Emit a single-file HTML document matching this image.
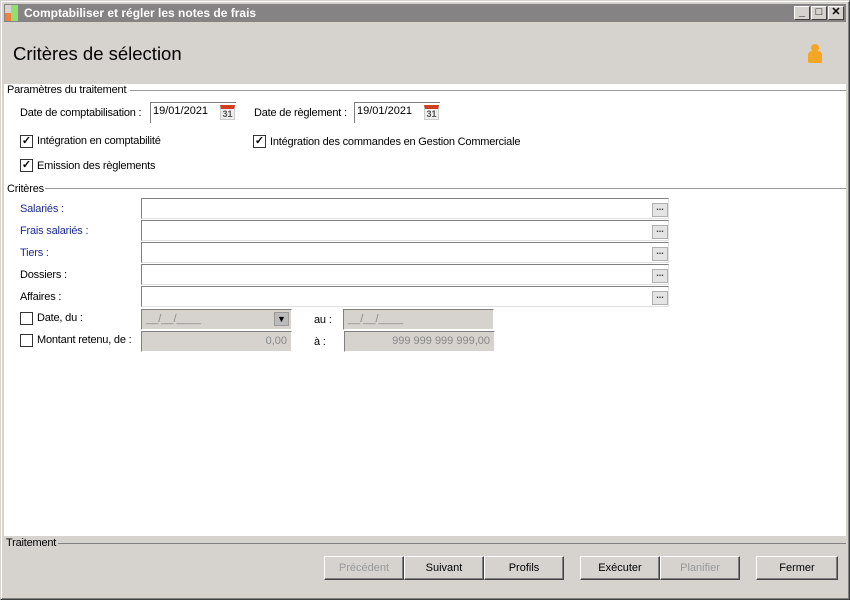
<!DOCTYPE html>
<html><head><meta charset="utf-8"><style>
*{margin:0;padding:0;box-sizing:border-box}
body{width:850px;height:600px;overflow:hidden;background:#d6d3ce;font-family:"Liberation Sans",sans-serif;font-size:11px;color:#000;position:relative}
.a{position:absolute}
.win{left:0;top:0;width:850px;height:600px;border:1px solid #d6d3ce;border-right-color:#404040;border-bottom-color:#404040;box-shadow:inset 1px 1px #fff,inset -1px -1px #808080}
.title{left:4px;top:4px;width:842px;height:18px;background:#858384;color:#fff;font-weight:bold;font-size:12px;line-height:18px;padding-left:20px}
.tb{top:6px;width:16px;height:14px;background:#d6d3ce;border:1px solid;border-color:#fff #404040 #404040 #fff;font-size:11px;line-height:11px;text-align:center;color:#000;font-weight:bold}
.white{left:4px;top:84px;width:842px;height:452px;background:#fff}
.lbl{white-space:nowrap;letter-spacing:-0.2px}
.blue{color:#1c2a8c}
.inp{background:#fff;border:1px solid;border-color:#808080 #e0e0e0 #e0e0e0 #808080;height:21px}
.dis{background:#d6d3ce;border:1px solid;border-color:#808080 #fff #fff #808080;color:#888;height:21px;line-height:19px;padding:0 4px}
.cb{width:13px;height:13px;border:1px solid #333;background:#fff;font-size:11px;line-height:10px;text-align:center;font-weight:bold}
.dots{width:16px;height:14px;background:#e4e4e4;border:1px solid #b0b0b0;font-size:9px;line-height:6px;text-align:center;font-weight:bold;color:#333}
.line{height:1px;background:#999}
.btn{top:556px;height:24px;background:#d6d3ce;border:1px solid;border-color:#fff #404040 #404040 #fff;box-shadow:inset -1px -1px #808080;text-align:center;line-height:22px;font-size:11px}
.gr{color:#999}
.cal{width:15px;height:15px;background:#eee;border:1px solid #ccc;border-top:4px solid #d04020;font-size:9px;font-weight:bold;color:#555;line-height:10px;text-align:center}
</style></head><body>
<div class="a win"></div>
<div class="a title">Comptabiliser et régler les notes de frais</div>
<div class="a" style="left:5px;top:5px;width:6px;height:8px;background:#d6d3ce"></div>
<div class="a" style="left:5px;top:13px;width:6px;height:8px;background:#f08040"></div>
<div class="a" style="left:11px;top:5px;width:7px;height:16px;background:#90e070"></div>
<div class="a tb" style="left:794px">_</div>
<div class="a tb" style="left:811px">□</div>
<div class="a tb" style="left:828px">✕</div>
<div class="a" style="left:13px;top:43px;font-size:18.5px">Critères de sélection</div>
<div class="a" style="left:811px;top:44px;width:8px;height:8px;border-radius:50%;background:#f5a623"></div>
<div class="a" style="left:808px;top:51px;width:14px;height:12px;border-radius:4px 4px 2px 2px;background:#f5a623"></div>
<div class="a white"></div>
<div class="a lbl" style="left:7px;top:84px">Paramètres du traitement</div>
<div class="a line" style="left:130px;top:90px;width:716px"></div>
<div class="a lbl" style="left:20px;top:107px">Date de comptabilisation :</div>
<div class="a inp" style="left:150px;top:102px;width:86px;border-right:none;border-bottom:none;padding:2px 2px">19/01/2021</div>
<div class="a cal" style="left:220px;top:105px">31</div>
<div class="a lbl" style="left:254px;top:107px">Date de règlement :</div>
<div class="a inp" style="left:354px;top:102px;width:86px;border-right:none;border-bottom:none;padding:2px 2px">19/01/2021</div>
<div class="a cal" style="left:424px;top:105px">31</div>
<div class="a cb" style="left:20px;top:135px">✓</div>
<div class="a lbl" style="left:37px;top:135px">Intégration en comptabilité</div>
<div class="a cb" style="left:253px;top:135px">✓</div>
<div class="a lbl" style="left:270px;top:136px">Intégration des commandes en Gestion Commerciale</div>
<div class="a cb" style="left:20px;top:159px">✓</div>
<div class="a lbl" style="left:37px;top:160px">Emission des règlements</div>
<div class="a lbl" style="left:7px;top:183px">Critères</div>
<div class="a line" style="left:45px;top:188px;width:801px"></div>
<div class="a lbl blue" style="left:20px;top:203px">Salariés :</div>
<div class="a lbl blue" style="left:20px;top:225px">Frais salariés :</div>
<div class="a lbl blue" style="left:20px;top:247px">Tiers :</div>
<div class="a lbl" style="left:20px;top:269px">Dossiers :</div>
<div class="a lbl" style="left:20px;top:291px">Affaires :</div>
<div class="a inp" style="left:141px;top:198px;width:528px"></div>
<div class="a inp" style="left:141px;top:220px;width:528px"></div>
<div class="a inp" style="left:141px;top:242px;width:528px"></div>
<div class="a inp" style="left:141px;top:264px;width:528px"></div>
<div class="a inp" style="left:141px;top:286px;width:528px"></div>
<div class="a dots" style="left:652px;top:203px">...</div>
<div class="a dots" style="left:652px;top:225px">...</div>
<div class="a dots" style="left:652px;top:247px">...</div>
<div class="a dots" style="left:652px;top:269px">...</div>
<div class="a dots" style="left:652px;top:291px">...</div>
<div class="a cb" style="left:20px;top:312px"></div>
<div class="a lbl" style="left:37px;top:312px">Date, du :</div>
<div class="a dis" style="left:141px;top:309px;width:151px">__/__/____</div>
<div class="a" style="left:274px;top:312px;width:15px;height:14px;background:#bbb;border:1px solid #999;font-size:9px;text-align:center;line-height:12px">▼</div>
<div class="a lbl" style="left:314px;top:314px">au :</div>
<div class="a dis" style="left:343px;top:309px;width:151px">__/__/____</div>
<div class="a cb" style="left:20px;top:334px"></div>
<div class="a lbl" style="left:37px;top:334px">Montant retenu, de :</div>
<div class="a dis" style="left:141px;top:331px;width:151px;text-align:right">0,00</div>
<div class="a lbl" style="left:314px;top:336px">à :</div>
<div class="a dis" style="left:344px;top:331px;width:151px;text-align:right">999 999 999 999,00</div>
<div class="a lbl" style="left:6px;top:537px">Traitement</div>
<div class="a line" style="left:58px;top:543px;width:788px;background:#808080"></div>
<div class="a btn gr" style="left:324px;width:80px">Précédent</div>
<div class="a btn" style="left:404px;width:80px">Suivant</div>
<div class="a btn" style="left:484px;width:80px">Profils</div>
<div class="a btn" style="left:580px;width:80px">Exécuter</div>
<div class="a btn gr" style="left:660px;width:80px">Planifier</div>
<div class="a btn" style="left:756px;width:82px">Fermer</div>
</body></html>
